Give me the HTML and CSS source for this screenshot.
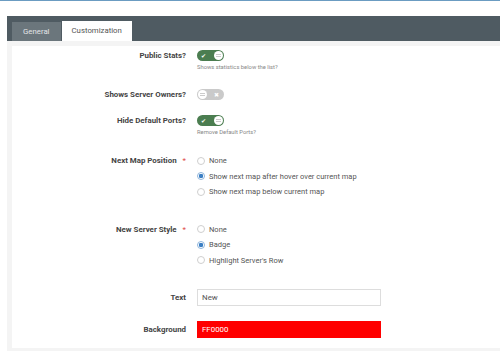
FILE: index.html
```html
<!DOCTYPE html>
<html lang="en">
<head>
  <meta charset="UTF-8">
  <title>Server List Settings</title>
  <link rel="stylesheet" href="styles.css">
</head>
<body>

  <div class="page">
    <div class="tabs">
      <div class="tab">General</div>
      <div class="tab active">Customization</div>
    </div>

    <div class="panel">

      <div class="row row-stats">
        <div class="label">Public Stats?</div>
        <div class="control">
          <span class="switch on"><span class="mark">&#10004;</span><span class="knob"></span></span>
          <p class="help">Shows statistics below the list?</p>
        </div>
      </div>

      <div class="row row-owners">
        <div class="label">Shows Server Owners?</div>
        <div class="control">
          <span class="switch off"><span class="knob"></span><span class="mark">&#10006;</span></span>
        </div>
      </div>

      <div class="row row-ports">
        <div class="label">Hide Default Ports?</div>
        <div class="control">
          <span class="switch on"><span class="mark">&#10004;</span><span class="knob"></span></span>
          <p class="help">Remove Default Ports?</p>
        </div>
      </div>

      <div class="row row-radio row-map">
        <div class="label">Next Map Position<span class="req">*</span></div>
        <div class="control">
          <div class="option"><span class="radio"></span>None</div>
          <div class="option"><span class="radio checked"></span>Show next map after hover over current map</div>
          <div class="option"><span class="radio"></span>Show next map below current map</div>
        </div>
      </div>

      <div class="row row-radio row-style">
        <div class="label">New Server Style<span class="req">*</span></div>
        <div class="control">
          <div class="option"><span class="radio"></span>None</div>
          <div class="option"><span class="radio checked"></span>Badge</div>
          <div class="option"><span class="radio"></span>Highlight Server's Row</div>
        </div>
      </div>

      <div class="row row-input row-text">
        <div class="label">Text</div>
        <div class="control">
          <input type="text" class="field" value="New">
        </div>
      </div>

      <div class="row row-input row-bg">
        <div class="label">Background</div>
        <div class="control">
          <input type="text" class="field red" value="FF0000">
        </div>
      </div>

    </div>
  </div>

</body>
</html>
```

FILE: styles.css
```css
body {
  margin: 0;
  font-family: Roboto, "Liberation Sans", Arial, sans-serif;
  background: #fff;
  color: #555;
  border-top: 1px solid #6b9cc2;
  overflow: hidden;
}
.page {
  padding: 15px 0 0 7px;
}
.tabs {
  display: flex;
  align-items: flex-end;
  height: 25px;
  background: #4f5b62;
  padding-left: 5px;
  gap: 1px;
}
.tab {
  height: 19px;
  line-height: 19px;
  padding: 0 11px;
  font-size: 7.8px;
  background: #6b767c;
  color: #e2e5e7;
}
.tab.active {
  height: 20px;
  line-height: 20px;
  padding: 0 10px;
  background: #fff;
  color: #555;
}
.panel {
  border: 5px solid #f4f4f4;
  border-right: none;
  padding-bottom: 10px;
}
.row {
  display: flex;
  align-items: flex-start;
}
.label {
  width: 174px;
  padding-right: 4px;
  text-align: right;
  font-weight: bold;
  font-size: 7.9px;
  color: #444;
  flex-shrink: 0;
}
.control {
  margin-left: 7px;
}
.req {
  color: #e04848;
  font-weight: normal;
  margin-left: 6px;
}

/* switches */
.row-stats { margin-top: 4px; }
.row-owners { margin-top: 17px; }
.row-ports { margin-top: 15px; }
.row-stats .label,
.row-owners .label,
.row-ports .label {
  line-height: 11px;
}
.switch {
  display: flex;
  align-items: center;
  justify-content: space-between;
  width: 27px;
  height: 11px;
  border-radius: 6px;
  padding: 0 1px 0 4px;
  box-sizing: border-box;
}
.switch.on {
  background: #4b7d50;
}
.switch.off {
  background: #cacaca;
  padding: 0 5px 0 1px;
}
.knob {
  width: 9px;
  height: 9px;
  border-radius: 50%;
  background: #fff;
  background-image: linear-gradient(#fff 3px, #ccc 3px, #ccc 4px, #fff 4px, #fff 5px, #ccc 5px, #ccc 6px, #fff 6px);
  background-size: 5px 9px;
  background-repeat: no-repeat;
  background-position: center;
}
.mark {
  color: #fff;
  font-size: 6px;
  line-height: 11px;
}
.help {
  margin: 1px 0 0;
  font-size: 5.8px;
  line-height: 10px;
  color: #888;
}

/* radios */
.row-map { margin-top: 16px; }
.row-style { margin-top: 22px; }
.row-radio .label {
  line-height: 16px;
}
.option {
  display: flex;
  align-items: center;
  height: 15.5px;
  font-size: 7.5px;
  color: #555;
}
.radio {
  width: 6px;
  height: 6px;
  border: 1px solid #cfcfcf;
  border-radius: 50%;
  margin-right: 4px;
  box-sizing: content-box;
}
.radio.checked {
  border-color: #8fb5dc;
  background: radial-gradient(circle, #3b7fc4 0, #3b7fc4 2px, #fff 2.4px);
}

/* inputs */
.row-text { margin-top: 21px; }
.row-bg { margin-top: 15px; }
.row-input .label {
  line-height: 17px;
}
.field {
  display: block;
  width: 184px;
  height: 17px;
  box-sizing: border-box;
  border: 1px solid #ddd;
  padding: 0 4px;
  font-family: Roboto, "Liberation Sans", Arial, sans-serif;
  font-size: 7.9px;
  color: #555;
  outline: none;
}
.field.red {
  background: #ff0000;
  border-color: #f00;
  color: #fff;
}
```
